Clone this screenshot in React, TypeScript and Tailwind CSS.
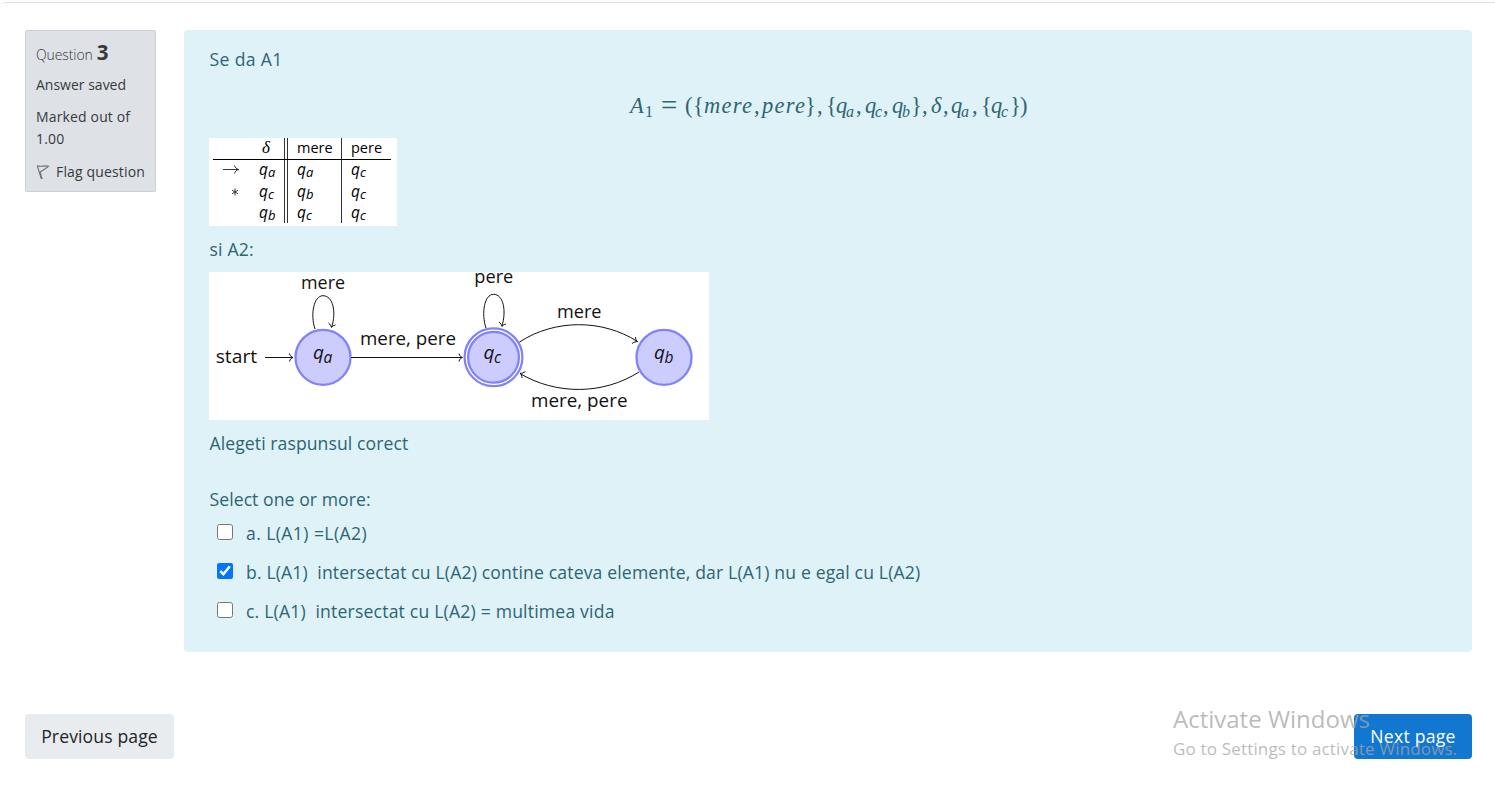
import React from "react";

type Glyph = { t: string; w: number; sub?: boolean; it?: boolean; wide?: boolean; big?: boolean };

const formula: Glyph[] = [
  { t: "A", w: 15, it: true }, { t: "1", w: 17, sub: true }, { t: "=", w: 23, big: true },
  { t: "(", w: 8 }, { t: "{", w: 11 }, { t: "mere", w: 50, it: true, wide: true }, { t: ",", w: 8 },
  { t: "pere", w: 43, it: true, wide: true }, { t: "}", w: 12 }, { t: ",", w: 9 },
  { t: "{", w: 10 }, { t: "q", w: 10, it: true }, { t: "a", w: 10, sub: true, it: true }, { t: ",", w: 9 },
  { t: "q", w: 10, it: true }, { t: "c", w: 8, sub: true, it: true }, { t: ",", w: 9 },
  { t: "q", w: 10, it: true }, { t: "b", w: 9, sub: true, it: true }, { t: "}", w: 11 }, { t: ",", w: 9 },
  { t: "δ", w: 12, it: true }, { t: ",", w: 8 },
  { t: "q", w: 10, it: true }, { t: "a", w: 11, sub: true, it: true }, { t: ",", w: 9 },
  { t: "{", w: 10 }, { t: "q", w: 10, it: true }, { t: "c", w: 9, sub: true, it: true }, { t: "}", w: 10 }, { t: ")", w: 8 },
];

function Formula() {
  return (
    <div className="ml-[421px] mt-4 flex h-7 items-baseline whitespace-nowrap font-['Liberation_Serif',serif] text-[22.5px] leading-7">
      {formula.map((g, i) => (
        <span
          key={i}
          style={{ width: g.w }}
          className={`shrink-0 ${g.it ? "italic" : ""} ${g.sub ? "relative top-[4px] text-[16px]" : ""} ${g.wide ? "tracking-[1.25px]" : ""} ${g.big ? "relative -left-px top-[2px] text-[29px] leading-none" : ""}`}
        >
          {g.t}
        </span>
      ))}
    </div>
  );
}

function Q({ s }: { s: string }) {
  return (
    <span className="italic">
      q<span className="relative top-[2px] text-[13px]">{s}</span>
    </span>
  );
}

function TransitionTable() {
  const rows = [["→", "a", "a", "c"], ["∗", "c", "b", "c"], ["", "b", "c", "c"]];
  return (
    <div className="h-[88px] w-[188px] bg-white pl-1 text-[15.5px] text-black">
      <div className="grid w-[178px] grid-cols-[36px_39px_54px_49px] border-b border-black leading-[21px]">
        <span />
        <span className="h-[21px] border-r-4 border-double border-[#333] pl-[13px] font-['Liberation_Serif',serif] text-[17px] italic leading-[19px]">δ</span>
        <span className="h-[21px] border-r border-[#333] pl-[9px] text-[14.5px] leading-[19px]">mere</span>
        <span className="pl-[9px] text-[14.5px] leading-[19px]">pere</span>
      </div>
      {rows.map((r, i) => (
        <div key={i} className={`grid w-[178px] grid-cols-[36px_39px_54px_49px] ${i === 0 ? "h-[22px] leading-[19px]" : i === 1 ? "h-[21px] leading-[19px]" : "h-[20px] leading-[18px]"}`}>
          <span className={`flex items-center pl-[9px] ${i === 0 ? "pb-[2px]" : "pb-[1px]"}`}>
            {r[0] === "→" && (
              <svg width="18" height="10" viewBox="0 0 18 10" fill="none" stroke="#222" strokeWidth="0.9">
                <path d="M1 4.5H16.5M12.5 0.5C13 2.5 14.5 4 16.8 4.5C14.5 5 13 6.5 12.5 8.5" />
              </svg>
            )}
            {r[0] === "∗" && (
              <svg className="ml-[9px]" width="8" height="8" viewBox="0 0 8 8" fill="none" stroke="#222" strokeWidth="0.9">
                <path d="M4 0.5V7.5M1 2.2L7 5.8M7 2.2L1 5.8" />
              </svg>
            )}
          </span>
          <span className="border-r-4 border-double border-[#333] pl-[10px]"><Q s={r[1]} /></span>
          <span className="border-r border-[#333] pl-[9px]"><Q s={r[2]} /></span>
          <span className="pl-[9px]"><Q s={r[3]} /></span>
        </div>
      ))}
    </div>
  );
}

function Label({ x, y, w, children }: { x: number; y: number; w: number; children: string }) {
  return <text x={x} y={y} textLength={w} lengthAdjust="spacingAndGlyphs" fontSize="18.5">{children}</text>;
}

function StateName({ x, s }: { x: number; s: string }) {
  return (
    <g fontStyle="italic">
      <text x={x} y="87" fontSize="19">q</text>
      <text x={x + 10.5} y="91" fontSize="15.5">{s}</text>
    </g>
  );
}

function Diagram() {
  return (
    <svg className="block bg-white font-['Open_Sans',sans-serif]" width="500" height="148" viewBox="0 0 500 148" fill="#111">
      <g fill="#ccccff" stroke="#8282fa" strokeWidth="2.3">
        <circle cx="114" cy="85.3" r="27.5" />
        <circle cx="284.5" cy="85.3" r="28.9" fill="#fff" />
        <circle cx="284.5" cy="85.3" r="25.4" />
        <circle cx="455" cy="85.3" r="27.5" />
      </g>
      <g fill="none" stroke="#111" strokeWidth="1">
        <path d="M56 85.5H84M142 85.5H253" />
        <path d="M106 57C101 42 105 23.7 114 23.7C124 23.7 127.5 40 122.7 55" />
        <path d="M277 56C272 41 275.5 22.3 284.5 22.3C294.5 22.3 297.5 39 293 54" />
        <path d="M310.5 70C346 47 393 47 428.5 69.5" />
        <path d="M430 100C394 123 347 123 311 101.5" />
        <path d="M80.5 81.5C81 84 82.5 85 84 85.5C82.5 86 81 87 80.5 89.5" />
        <path d="M250 81.5C250.5 84 252 85 253.5 85.5C252 86 250.5 87 250 89.5" />
        <path d="M119.5 51C121.5 52.5 122 54 122.5 55.5C123.5 54 124.5 53.5 126.5 53" />
        <path d="M290 50C292 51.5 292.5 53 293 54.5C294 53 295 52.5 297 52" />
        <path d="M426.5 65C426.5 67.5 427.5 69 428.7 69.7C427 69.5 425 70 423 71.5" />
        <path d="M316.5 99.5C314.5 101 312.5 101.5 311 101.2C312.3 102 313 103.5 313 106" />
      </g>
      <Label x={92} y={16.7} w={44}>mere</Label>
      <Label x={265.3} y={10.8} w={39}>pere</Label>
      <Label x={151} y={73} w={96}>mere, pere</Label>
      <Label x={348} y={45.6} w={44.5}>mere</Label>
      <Label x={322} y={134.5} w={96.5}>mere, pere</Label>
      <Label x={6.7} y={90.8} w={41.5}>start</Label>
      <StateName x={104} s="a" />
      <StateName x={274.5} s="c" />
      <StateName x={445} s="b" />
    </svg>
  );
}

function Option({ checked, tracking, children }: { checked?: boolean; tracking: string; children: React.ReactNode }) {
  return (
    <label className="flex h-[39px] items-start pl-2">
      <input type="checkbox" defaultChecked={checked} className="mt-[6px] h-4 w-4 shrink-0" />
      <span className={`ml-[13px] mt-px whitespace-pre leading-7 ${tracking}`}>{children}</span>
    </label>
  );
}

export default function App() {
  return (
    <div className="relative h-[795px] w-full overflow-hidden bg-white font-['Open_Sans',sans-serif] text-[17.6px]">
      <main className="mt-[2px] h-[793px] rounded-tl-md border-t border-[#dee2e6] pl-[25px] pr-[23px] pt-[27px]">
        <div className="flex items-start gap-7">
          <aside className="h-[162px] w-[131px] shrink-0 whitespace-nowrap rounded-[2px] border border-[#cad0d7] bg-[#dee2e6] pl-[10px] pt-[11px] text-[14px] text-[#373a3c]">
            <h3 className="flex h-8 items-baseline font-light leading-[26px] tracking-[-0.1px]">
              Question<span className="ml-[4px] text-[20.5px] font-bold leading-[20px]">3</span>
            </h3>
            <p className="h-8 leading-[22px]">Answer saved</p>
            <p className="h-[55px] leading-[22px] tracking-[0.15px]">Marked out of<br />1.00</p>
            <p className="flex items-center leading-[22px] tracking-[0.15px]">
              <svg className="mr-[6px]" width="14" height="16" viewBox="0 0 14 16" fill="none" stroke="#707375" strokeWidth="1.1">
                <path d="M1.2 1.5L5.2 14.5H6L4.2 8.3M1.5 1.8C5 3.3 8 1 12.5 2.2L8.5 5.2L3.8 8.3" />
              </svg>
              Flag question
            </p>
          </aside>
          <section className="h-[622px] flex-1 rounded bg-[#def2f8] pl-[25px] pt-[15px] text-[#2f6473]">
            <p className="h-7 pl-[0.5px] leading-7 tracking-[0.35px]">Se da A1</p>
            <Formula />
            <div className="mt-[21px]"><TransitionTable /></div>
            <p className="mt-[9px] h-[37px] pl-[0.5px] leading-7 tracking-[0.2px]">si A2:</p>
            <Diagram />
            <p className="mt-[9px] h-14 pl-[0.5px] leading-7 tracking-[0.08px]">Alegeti raspunsul corect</p>
            <p className="h-[33px] pl-[0.5px] leading-7 tracking-[0.07px]">Select one or more:</p>
            <Option tracking="tracking-[0.4px]">a. L(A1) =L(A2)</Option>
            <Option checked tracking="tracking-[0.15px]">{"b. L(A1)  intersectat cu L(A2) contine cateva elemente, dar L(A1) nu e egal cu L(A2)"}</Option>
            <Option tracking="tracking-[0.19px]">{"c. L(A1)  intersectat cu L(A2) = multimea vida"}</Option>
          </section>
        </div>
        <nav className="mt-[62px] flex justify-between">
          <button className="h-[45px] w-[149px] rounded bg-[#e9ecef] tracking-[0.12px] text-[#212529]">Previous page</button>
          <button className="h-[45px] w-[118px] rounded bg-[#1177d1] tracking-[0.25px] text-white">Next page</button>
        </nav>
      </main>
      <div className="pointer-events-none absolute left-[1173px] top-[703px] whitespace-nowrap text-[#a5a5a5]/75">
        <p className="text-[24px] leading-8">Activate Windows</p>
        <p className="text-[17px] leading-7 tracking-[0.17px]">Go to Settings to activate Windows.</p>
      </div>
    </div>
  );
}
